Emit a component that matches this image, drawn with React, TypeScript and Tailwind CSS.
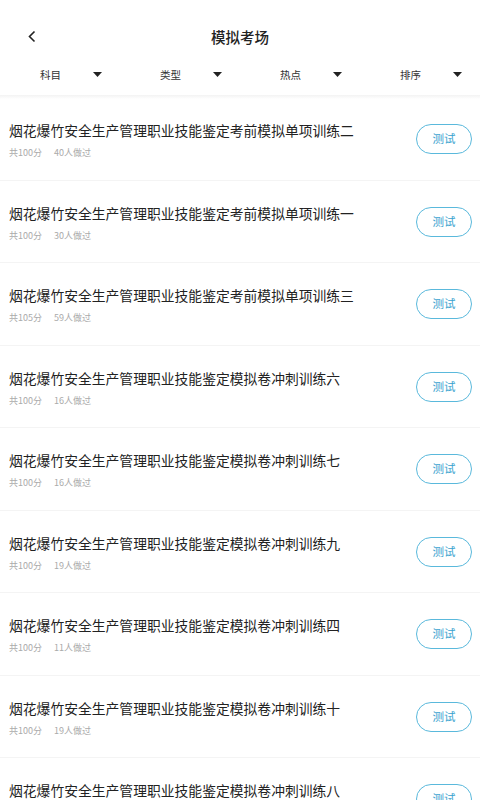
import { useState } from "react";

const filters = ["科目", "类型", "热点", "排序"];

const exams = [
  { title: "烟花爆竹安全生产管理职业技能鉴定考前模拟单项训练二", score: 100, count: 40 },
  { title: "烟花爆竹安全生产管理职业技能鉴定考前模拟单项训练一", score: 100, count: 30 },
  { title: "烟花爆竹安全生产管理职业技能鉴定考前模拟单项训练三", score: 105, count: 59 },
  { title: "烟花爆竹安全生产管理职业技能鉴定模拟卷冲刺训练六", score: 100, count: 16 },
  { title: "烟花爆竹安全生产管理职业技能鉴定模拟卷冲刺训练七", score: 100, count: 16 },
  { title: "烟花爆竹安全生产管理职业技能鉴定模拟卷冲刺训练九", score: 100, count: 19 },
  { title: "烟花爆竹安全生产管理职业技能鉴定模拟卷冲刺训练四", score: 100, count: 11 },
  { title: "烟花爆竹安全生产管理职业技能鉴定模拟卷冲刺训练十", score: 100, count: 19 },
  { title: "烟花爆竹安全生产管理职业技能鉴定模拟卷冲刺训练八", score: 100, count: 19 },
];

const App = () => {
  const [activeFilter, setActiveFilter] = useState<number | null>(null);

  return (
    <div
      className="h-[800px] w-[480px] overflow-hidden bg-white"
      style={{ fontFamily: '"Noto Sans CJK SC", "Noto Sans", sans-serif' }}
    >
      {/* header */}
      <div className="relative flex h-[56px] items-end justify-center pb-[12px]">
        <button className="absolute left-[27px] top-[30px] p-0">
          <svg width="10" height="13" viewBox="0 0 10 13" fill="none">
            <path d="M7.5 1.5L2.5 6.5L7.5 11.5" stroke="#222" strokeWidth="1.6" />
          </svg>
        </button>
        <h1 className="text-[14.5px] font-medium leading-none text-[#222]">模拟考场</h1>
      </div>

      {/* filters */}
      <div className="flex h-[39px] items-center">
        {filters.map((f, i) => (
          <button
            key={f}
            onClick={() => setActiveFilter(activeFilter === i ? null : i)}
            className="relative flex h-full w-[120px] items-center"
          >
            <span className="ml-[40px] text-[10.5px] leading-none text-[#333]">{f}</span>
            <svg
              className="absolute left-[93px] top-[16px]"
              width="9"
              height="5"
              viewBox="0 0 9 5"
            >
              <path d="M0 0H9L4.5 5Z" fill="#222" />
            </svg>
          </button>
        ))}
      </div>

      <div className="h-[4px] bg-gradient-to-b from-[#f3f3f3] to-white" />

      {/* list */}
      <div className="-mt-[1px]">
        {exams.map((e, i) => (
          <div
            key={i}
            className="flex h-[82.5px] items-start justify-between border-b border-[#f4f4f4] pl-[9px] pr-[8px]"
          >
            <div className="pt-[22px]">
              <p className="text-[13.8px] leading-[20px] text-[#222]">{e.title}</p>
              <div className="mt-[7px] flex gap-[12px] text-[9px] leading-[12px] text-[#aaa]">
                <span>共{e.score}分</span>
                <span>{e.count}人做过</span>
              </div>
            </div>
            <button className="mt-[26px] flex h-[30px] w-[56px] items-center justify-center rounded-full border-[1.5px] border-[#5ab9dc] text-[11.5px] text-[#3aa3cf]">
              测试
            </button>
          </div>
        ))}
      </div>
    </div>
  );
};

export default App;
